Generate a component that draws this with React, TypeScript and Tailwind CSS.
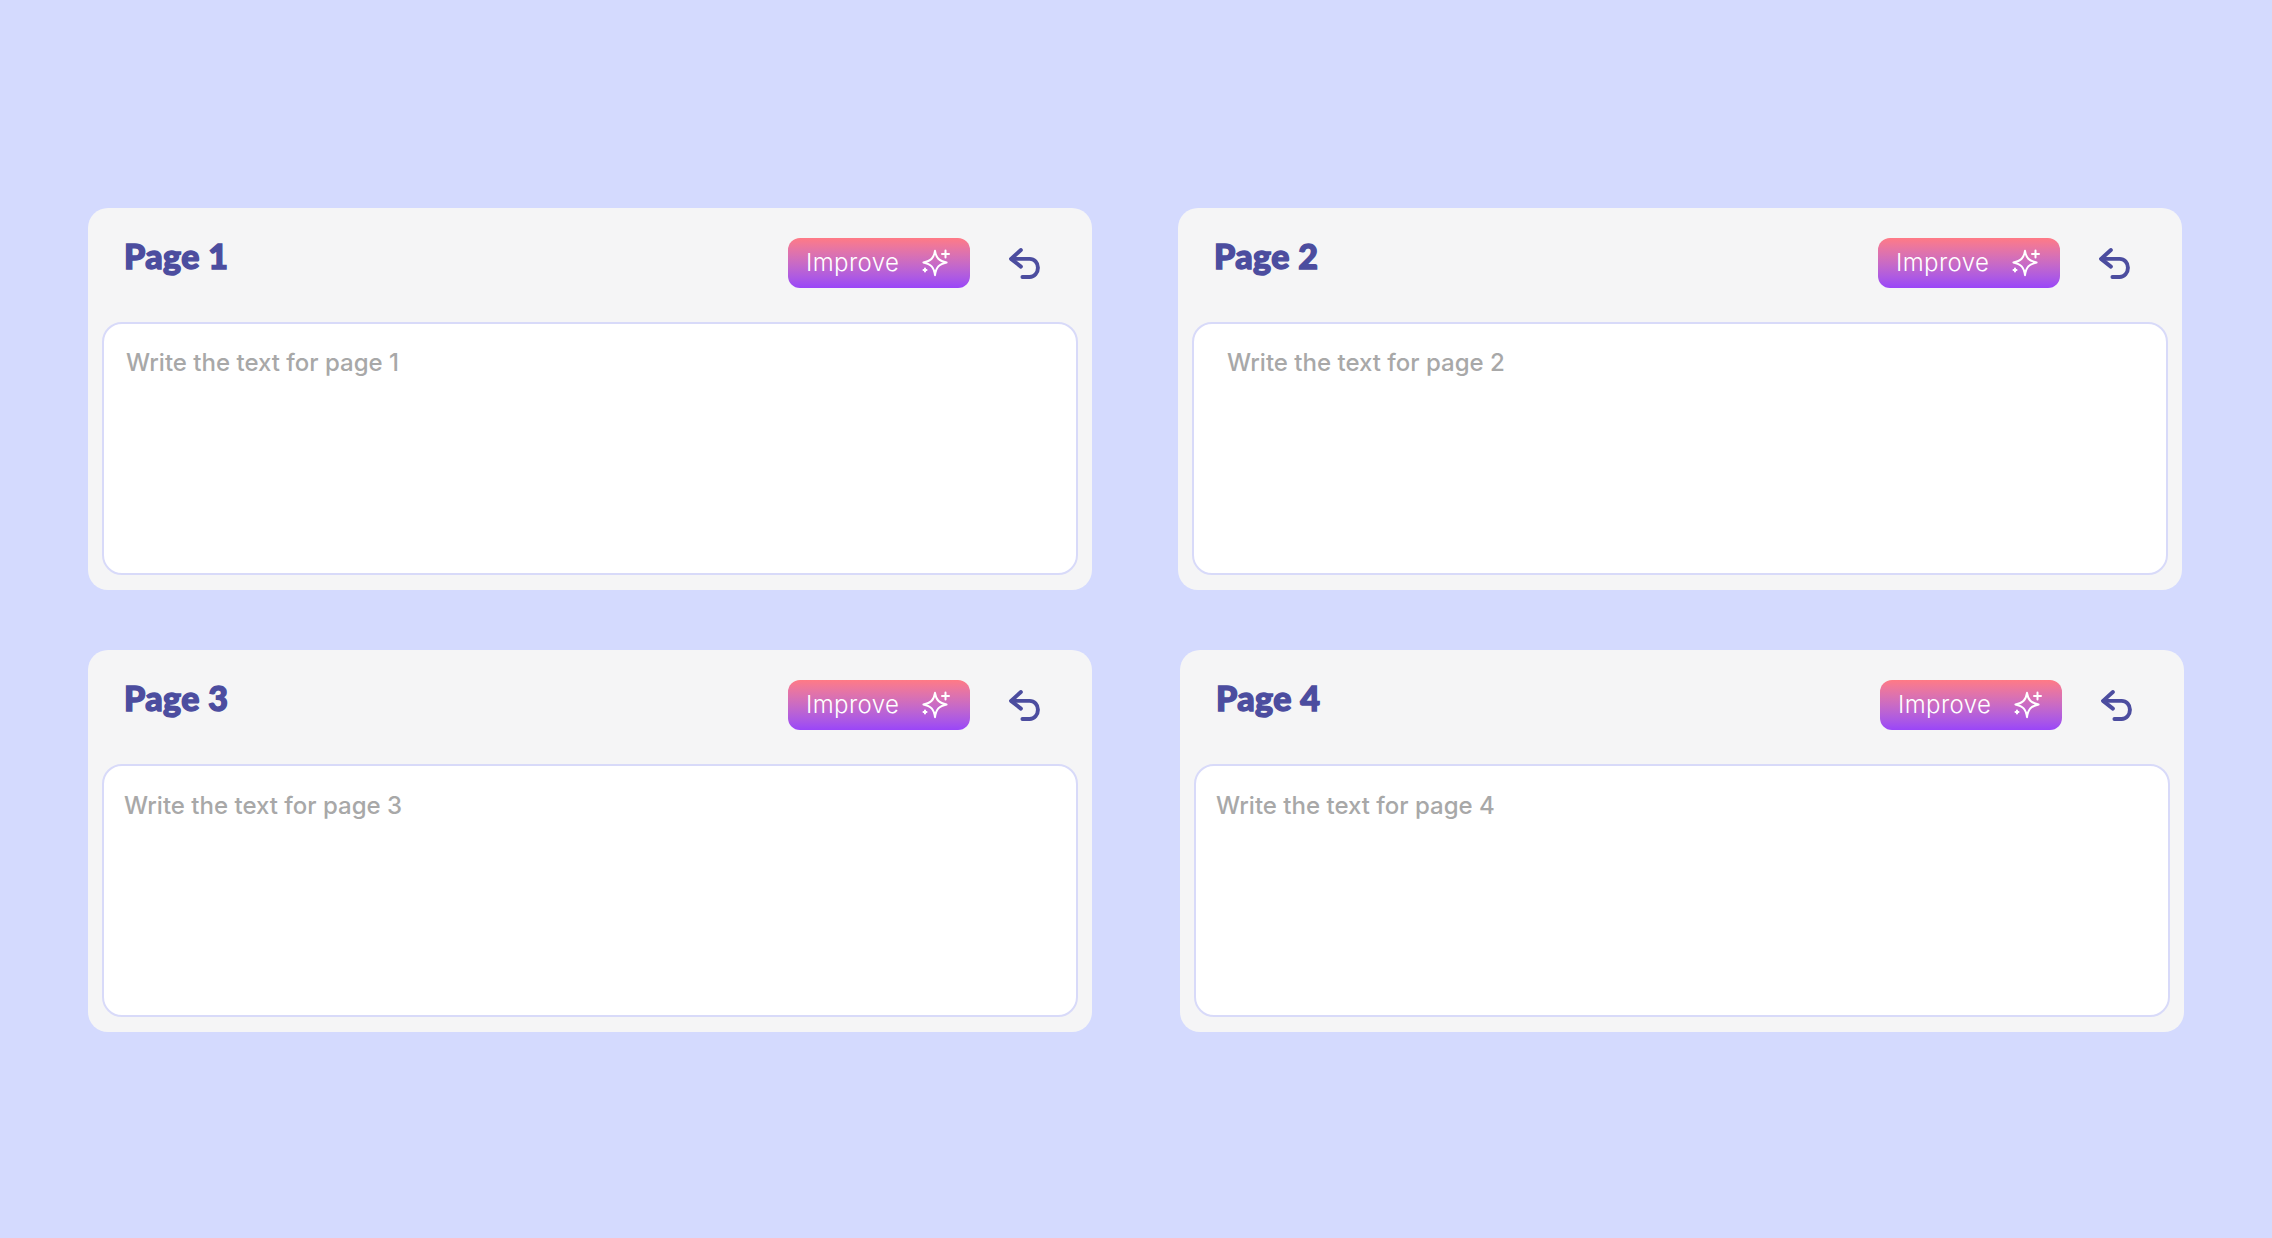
const PAGES = [
  { id: 1, textClass: 'pl-[22px] pt-[23px]' },
  { id: 2, textClass: 'pl-[33px] pt-[23px]' },
  { id: 3, textClass: 'pl-[20px] pt-[24px]' },
  { id: 4, textClass: 'pl-[20px] pt-[24px]' },
]

function SparkleIcon() {
  return (
    <svg className="h-[28px] w-[28px] shrink-0" viewBox="0 0 28 28" fill="none" stroke="currentColor" strokeWidth={2} strokeLinecap="round" strokeLinejoin="round" aria-hidden="true">
      <path d="M13 1.800c1.200 7.200 3.800 10 11.600 11.700-7.800 1.700-10.400 4.500-11.600 12.700-1.200-8.200-3.800-11-11.600-12.700C9.200 11.800 11.800 9 13 1.800Z" />
      <path d="M23.500 1.500v7M20 5h7" />
      <path d="M3 19.500v3M1.500 21h3" />
    </svg>
  )
}

function UndoIcon() {
  return (
    <svg className="h-[31px] w-[31px] shrink-0 text-[#4c4d9f]" viewBox="0 0 30 30" fill="none" stroke="currentColor" strokeWidth={3.8} strokeLinecap="round" strokeLinejoin="round" aria-hidden="true">
      <path d="M11.500 2 2 10.500l9.500 7.500" />
      <path d="M2.500 10.500H20c4.500 0 8 3.500 8 8.500s-3.500 9-8 9h-7" />
    </svg>
  )
}

function PageCard({ id, textClass }: { id: number; textClass: string }) {
  return (
    <section className="flex h-[382px] w-[1004px] flex-col rounded-[20px] bg-[#f5f5f6] px-[14px] pb-[15px]">
      <div className="flex h-[114px] items-start">
        <h2 className="ml-[22px] mt-[26px] font-['Lato'] text-[34px] leading-[44px] font-black tracking-[0.4px] text-[#4c4d9f] [-webkit-text-stroke:1.4px_#4c4d9f]">
          Page {id}
        </h2>
        <button
          type="button"
          className="ml-auto mt-[30px] flex h-[50px] w-[182px] items-center rounded-[12px] bg-gradient-to-b from-[#ff7a85] to-[#9a45f8] pl-[18px] font-['Inter'] text-[24px] font-light tracking-[0.4px] text-white"
        >
          Improve
          <span className="ml-auto mr-[20px] flex">
            <SparkleIcon />
          </span>
        </button>
        <span className="ml-[39px] mr-[38px] mt-[40px] flex">
          <UndoIcon />
        </span>
      </div>
      <div className={`flex-1 rounded-[20px] border-2 border-[#d8daf9] bg-white font-['Inter'] text-[24px] leading-[32px] font-medium text-[#a8a8a8] ${textClass}`}>
        Write the text for page {id}
      </div>
    </section>
  )
}

export default function App() {
  return (
    <main className="flex min-h-[1238px] flex-col gap-[60px] bg-[#d4dafe] pl-[88px] pt-[208px]">
      <div className="flex gap-[86px]">
        <PageCard {...PAGES[0]} />
        <PageCard {...PAGES[1]} />
      </div>
      <div className="flex gap-[88px]">
        <PageCard {...PAGES[2]} />
        <PageCard {...PAGES[3]} />
      </div>
    </main>
  )
}
